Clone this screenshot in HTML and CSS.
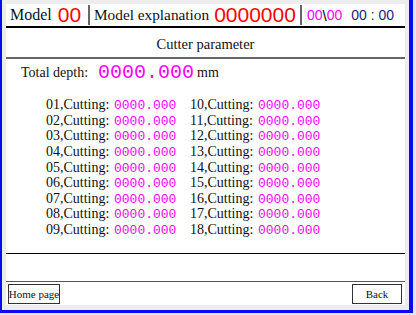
FILE: index.html
```html
<!DOCTYPE html>
<html>
<head>
<meta charset="utf-8">
<link rel="stylesheet" href="styles.css">
</head>
<body>
<div class="frame">
  <div class="panel">
    <div class="header">
      <div class="seg seg1"><span class="lbl-big">Model</span><span class="red num21">00</span></div>
      <div class="seg seg2"><span class="lbl-mid">Model explanation</span><span class="red num21">0000000</span></div>
      <div class="seg seg3"><span class="mag">00</span><span class="slash">\</span><span class="mag">00</span><span class="time">00 : 00</span></div>
    </div>
    <div class="title">Cutter parameter</div>
    <div class="total">
      <span class="total-lbl">Total depth:</span>
      <span class="total-val">0000.000</span>
      <span class="unit">mm</span>
    </div>
    <div class="rows">
      <span class="lab">01,Cutting:</span><span class="val">0000.000</span><span class="lab">10,Cutting:</span><span class="val">0000.000</span>
      <span class="lab">02,Cutting:</span><span class="val">0000.000</span><span class="lab">11,Cutting:</span><span class="val">0000.000</span>
      <span class="lab">03,Cutting:</span><span class="val">0000.000</span><span class="lab">12,Cutting:</span><span class="val">0000.000</span>
      <span class="lab">04,Cutting:</span><span class="val">0000.000</span><span class="lab">13,Cutting:</span><span class="val">0000.000</span>
      <span class="lab">05,Cutting:</span><span class="val">0000.000</span><span class="lab">14,Cutting:</span><span class="val">0000.000</span>
      <span class="lab">06,Cutting:</span><span class="val">0000.000</span><span class="lab">15,Cutting:</span><span class="val">0000.000</span>
      <span class="lab">07,Cutting:</span><span class="val">0000.000</span><span class="lab">16,Cutting:</span><span class="val">0000.000</span>
      <span class="lab">08,Cutting:</span><span class="val">0000.000</span><span class="lab">17,Cutting:</span><span class="val">0000.000</span>
      <span class="lab">09,Cutting:</span><span class="val">0000.000</span><span class="lab">18,Cutting:</span><span class="val">0000.000</span>
    </div>
    <div class="spacer"></div>
    <div class="footer">
      <div class="btn btn-home">Home page</div>
      <div class="btn btn-back">Back</div>
    </div>
  </div>
</div>
</body>
</html>
```

FILE: styles.css
```css
html, body {
  margin: 0;
  padding: 0;
}
body {
  background: #dde8f4;
  width: 416px;
  height: 315px;
  overflow: hidden;
  font-family: "Liberation Serif", "DejaVu Serif", "Times New Roman", serif;
  color: #111;
}
.frame {
  box-sizing: border-box;
  width: 413px;
  height: 313px;
  background: #ececec;
  border-left: 2px solid #0a0af0;
  border-right: 4px solid #0a0af0;
  border-bottom: 3px solid #0a0af0;
  padding: 4px 4px 5px 4px;
}
.panel {
  background: #fff;
  height: 301px;
  display: flex;
  flex-direction: column;
}
.header {
  display: flex;
  height: 22px;
  border-bottom: 2px solid #000;
  align-items: stretch;
}
.seg {
  display: flex;
  align-items: center;
  white-space: nowrap;
}
.seg1 {
  width: 84px;
  padding-left: 4px;
  box-sizing: border-box;
  border-right: 2px solid #666;
  margin: 1px 0;
}
.seg2 {
  width: 212px;
  padding-left: 4px;
  box-sizing: border-box;
  border-right: 2px solid #666;
  margin: 1px 0;
}
.seg3 {
  padding-left: 5px;
  font-family: "Liberation Sans", Arial, sans-serif;
  font-size: 14px;
}
.lbl-big {
  font-size: 16px;
  margin-right: 6px;
}
.lbl-mid {
  font-size: 15.3px;
  margin-right: 5px;
}
.num21 {
  font-family: "Liberation Sans", Arial, sans-serif;
  font-size: 21px;
  line-height: 20px;
}
.red { color: #ff0000; }
.mag { color: #ff00ff; }
.slash {
  color: #000;
  font-size: 15px;
}
.time {
  color: #1c1c80;
  margin-left: 9px;
}
.title {
  height: 31px;
  border-bottom: 2px solid #666;
  display: flex;
  align-items: center;
  justify-content: center;
  font-size: 14.5px;
  box-sizing: border-box;
  padding-top: 3px;
}
.total {
  display: flex;
  align-items: center;
  height: 25px;
  padding-left: 15px;
  margin-top: 1px;
}
.total-lbl {
  font-size: 14px;
  width: 77px;
}
.total-val {
  font-family: "Liberation Mono", "Courier New", monospace;
  font-size: 20px;
  color: #ff00ff;
  width: 99px;
}
.unit {
  font-size: 14px;
}
.rows {
  display: grid;
  grid-template-columns: 68px 76px 68px auto;
  grid-auto-rows: 15.6px;
  padding-left: 40px;
  margin-top: 12px;
  align-items: center;
}
.lab {
  font-size: 14px;
  line-height: 15px;
  white-space: nowrap;
}
.val {
  font-family: "Liberation Mono", "Courier New", monospace;
  font-size: 13px;
  color: #ff00ff;
  line-height: 15px;
  padding-top: 2px;
}
.spacer {
  margin-top: 15.6px;
  height: 29px;
  box-sizing: border-box;
  border-top: 1px solid #000;
  border-bottom: 1px solid #555;
}
.footer {
  display: flex;
  justify-content: space-between;
  padding: 2px 3px 0 2px;
}
.btn {
  box-sizing: border-box;
  height: 20px;
  border: 1px solid #333;
  font-size: 11px;
  display: flex;
  align-items: center;
  justify-content: center;
  white-space: nowrap;
}
.btn-home {
  width: 52px;
}
.btn-back {
  width: 50px;
}
```
